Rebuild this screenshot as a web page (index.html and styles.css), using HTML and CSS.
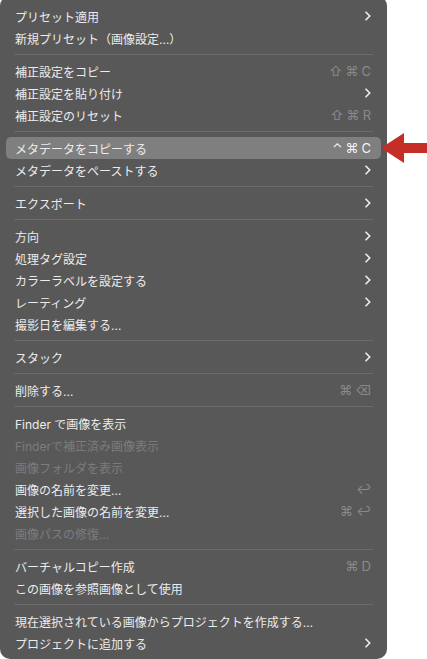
FILE: index.html
```html
<!DOCTYPE html>
<html lang="ja">
<head>
    <meta charset="UTF-8">
    <title>Context Menu</title>
    <link rel="stylesheet" href="styles.css">
</head>
<body>
    <div class="menu">
        <div class="item"><span>プリセット適用</span><span class="chev"><svg width="6" height="10" viewBox="0 0 6 10"><path d="M1 1.2 L4.8 5 L1 8.8"/></svg></span></div>
        <div class="item"><span>新規プリセット（画像設定…）</span></div>
        <div class="sep"></div>
        <div class="item"><span>補正設定をコピー</span><span class="keys"><span>⇧</span><span>⌘</span><span>C</span></span></div>
        <div class="item"><span>補正設定を貼り付け</span><span class="chev"><svg width="6" height="10" viewBox="0 0 6 10"><path d="M1 1.2 L4.8 5 L1 8.8"/></svg></span></div>
        <div class="item"><span>補正設定のリセット</span><span class="keys"><span>⇧</span><span>⌘</span><span>R</span></span></div>
        <div class="sep"></div>
        <div class="item active"><span>メタデータをコピーする</span><span class="keys"><span>⌃</span><span>⌘</span><span>C</span></span></div>
        <div class="item"><span>メタデータをペーストする</span><span class="chev"><svg width="6" height="10" viewBox="0 0 6 10"><path d="M1 1.2 L4.8 5 L1 8.8"/></svg></span></div>
        <div class="sep"></div>
        <div class="item"><span>エクスポート</span><span class="chev"><svg width="6" height="10" viewBox="0 0 6 10"><path d="M1 1.2 L4.8 5 L1 8.8"/></svg></span></div>
        <div class="sep"></div>
        <div class="item"><span>方向</span><span class="chev"><svg width="6" height="10" viewBox="0 0 6 10"><path d="M1 1.2 L4.8 5 L1 8.8"/></svg></span></div>
        <div class="item"><span>処理タグ設定</span><span class="chev"><svg width="6" height="10" viewBox="0 0 6 10"><path d="M1 1.2 L4.8 5 L1 8.8"/></svg></span></div>
        <div class="item"><span>カラーラベルを設定する</span><span class="chev"><svg width="6" height="10" viewBox="0 0 6 10"><path d="M1 1.2 L4.8 5 L1 8.8"/></svg></span></div>
        <div class="item"><span>レーティング</span><span class="chev"><svg width="6" height="10" viewBox="0 0 6 10"><path d="M1 1.2 L4.8 5 L1 8.8"/></svg></span></div>
        <div class="item"><span>撮影日を編集する…</span></div>
        <div class="sep"></div>
        <div class="item"><span>スタック</span><span class="chev"><svg width="6" height="10" viewBox="0 0 6 10"><path d="M1 1.2 L4.8 5 L1 8.8"/></svg></span></div>
        <div class="sep"></div>
        <div class="item"><span>削除する…</span><span class="keys"><span>⌘</span><span>⌫</span></span></div>
        <div class="sep"></div>
        <div class="item"><span>Finder で画像を表示</span></div>
        <div class="item disabled"><span>Finderで補正済み画像表示</span></div>
        <div class="item disabled"><span>画像フォルダを表示</span></div>
        <div class="item"><span>画像の名前を変更…</span><span class="keys"><span>↩</span></span></div>
        <div class="item"><span>選択した画像の名前を変更…</span><span class="keys"><span>⌘</span><span>↩</span></span></div>
        <div class="item disabled"><span>画像パスの修復…</span></div>
        <div class="sep"></div>
        <div class="item"><span>バーチャルコピー作成</span><span class="keys"><span>⌘</span><span>D</span></span></div>
        <div class="item"><span>この画像を参照画像として使用</span></div>
        <div class="sep"></div>
        <div class="item"><span>現在選択されている画像からプロジェクトを作成する…</span></div>
        <div class="item"><span>プロジェクトに追加する</span><span class="chev"><svg width="6" height="10" viewBox="0 0 6 10"><path d="M1 1.2 L4.8 5 L1 8.8"/></svg></span></div>
    </div>

    <!-- red callout arrow pointing at the highlighted item -->
    <svg class="pointer" width="46" height="30" viewBox="0 0 46 30">
        <polygon points="0,15 23,0 23,10 46,10 46,20 23,20 23,30"/>
    </svg>
</body>
</html>
```

FILE: styles.css
```css
body {
    margin: 0;
    padding: 0;
    background-color: #ffffff;
    font-family: 'Inter', 'Noto Sans CJK JP', sans-serif;
    font-size: 12px;
    overflow: hidden;
}
.menu {
    width: 387px;
    margin-top: -4px;
    padding: 9px 0 5px;
    background-color: #585858;
    border-radius: 10px;
    box-sizing: border-box;
}
.item {
    display: flex;
    align-items: center;
    justify-content: space-between;
    height: 22px;
    margin: 0 6px;
    padding: 0 10px 0 9px;
    color: #ececec;
    border-radius: 5px;
    white-space: nowrap;
}
.item.active {
    background-color: #7f7f7f;
}
.item.disabled {
    color: #7c7c7c;
}
.chev {
    display: flex;
    align-items: center;
}
.chev path {
    fill: none;
    stroke: #f0f0f0;
    stroke-width: 1.6;
    stroke-linecap: round;
    stroke-linejoin: round;
}
.keys {
    display: flex;
    gap: 3px;
    color: #8a8a8a;
    font-family: 'Inter', 'DejaVu Sans', sans-serif;
    font-size: 13px;
}
.item.active .keys {
    color: #f4f4f4;
}
.sep {
    height: 1px;
    margin: 5px 14px;
    background-color: #6b6b6b;
}
.pointer {
    position: absolute;
    left: 381px;
    top: 133px;
}
.pointer polygon {
    fill: #c52e27;
}
```
